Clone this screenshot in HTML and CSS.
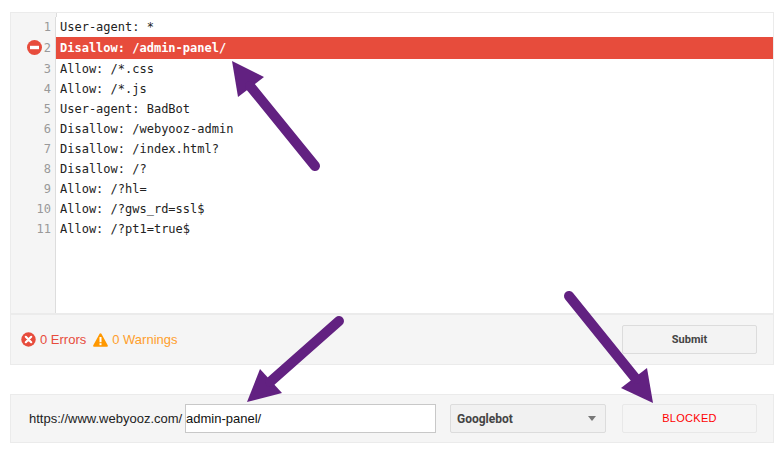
FILE: index.html
```html
<!DOCTYPE html>
<html lang="en">
<head>
<meta charset="utf-8">
<title>robots.txt tester</title>
<link rel="stylesheet" href="styles.css">
</head>
<body>
<div class="page">
  <section class="editor-panel">
    <div class="editor">
      <div class="line"><span class="gutter">1</span><span class="code">User-agent: *</span></div>
      <div class="line line-error"><span class="gutter"><svg class="marker" width="15" height="15" viewBox="0 0 15 15"><circle cx="7.5" cy="7.5" r="7.5" fill="#e74c3c"/><rect x="3" y="5.8" width="9" height="3.4" fill="#fff"/></svg>2</span><span class="code">Disallow: /admin-panel/</span></div>
      <div class="line"><span class="gutter">3</span><span class="code">Allow: /*.css</span></div>
      <div class="line"><span class="gutter">4</span><span class="code">Allow: /*.js</span></div>
      <div class="line"><span class="gutter">5</span><span class="code">User-agent: BadBot</span></div>
      <div class="line"><span class="gutter">6</span><span class="code">Disallow: /webyooz-admin</span></div>
      <div class="line"><span class="gutter">7</span><span class="code">Disallow: /index.html?</span></div>
      <div class="line"><span class="gutter">8</span><span class="code">Disallow: /?</span></div>
      <div class="line"><span class="gutter">9</span><span class="code">Allow: /?hl=</span></div>
      <div class="line"><span class="gutter">10</span><span class="code">Allow: /?gws_rd=ssl$</span></div>
      <div class="line"><span class="gutter">11</span><span class="code">Allow: /?pt1=true$</span></div>
      <div class="filler"><span class="gutter"></span></div>
    </div>
    <div class="status-bar">
      <div class="counts">
        <svg class="icon" width="15" height="15" viewBox="0 0 15 15"><circle cx="7.5" cy="7.5" r="7.2" fill="#e74c3c"/><path d="M4.8 4.8l5.4 5.4M10.2 4.8l-5.4 5.4" stroke="#fff" stroke-width="2.2" stroke-linecap="round"/></svg>
        <span class="count-errors">0 Errors</span>
        <svg class="icon icon-warn" width="15" height="14" viewBox="0 0 15 14"><path d="M7.5 .3c.4 0 .7.2.9.5l6.3 11.5c.4.7-.1 1.5-.9 1.5H1.2c-.8 0-1.3-.8-.9-1.5L6.6.8c.2-.3.5-.5.9-.5z" fill="#ff9800"/><rect x="6.5" y="4" width="2" height="5.2" fill="#fff"/><rect x="6.5" y="10.2" width="2" height="2" fill="#fff"/></svg>
        <span class="count-warnings">0 Warnings</span>
      </div>
      <button class="btn" type="button">Submit</button>
    </div>
  </section>
  <section class="test-panel">
    <span class="host">https://www.webyooz.com/</span>
    <span class="url-input">admin-panel/</span>
    <div class="agent-select"><span>Googlebot</span><i class="caret"></i></div>
    <div class="result">BLOCKED</div>
  </section>
  <svg class="arrows" width="783" height="454" viewBox="0 0 783 454">
    <g fill="#622181" stroke="none">
      <path d="M232 61L264 77L238 97Z"/>
      <path d="M260 369L282 393L247 402Z"/>
      <path d="M647 368L621 388L653 403Z"/>
    </g>
    <g stroke="#622181" stroke-width="10" stroke-linecap="round" fill="none">
      <path d="M315 166L250 86"/>
      <path d="M339 321L270 382"/>
      <path d="M569 296L636 379"/>
    </g>
  </svg>
</div>
</body>
</html>
```
FILE: styles.css
```css
* { box-sizing: border-box; }
html, body { margin: 0; padding: 0; background: #fff; }
.page {
  position: relative;
  width: 783px;
  height: 454px;
  padding: 12px 10px 0;
  font-family: "Liberation Sans", Arial, sans-serif;
  overflow: hidden;
}
.editor-panel {
  width: 764px;
  height: 353px;
  border: 1px solid #ebebeb;
  display: flex;
  flex-direction: column;
}
.editor {
  position: relative;
  flex: 1;
  display: flex;
  flex-direction: column;
  padding-top: 4px;
  background: #fff;
}
.editor::before {
  content: "";
  position: absolute;
  left: 0;
  top: 0;
  width: 45px;
  height: 4px;
  background: #f5f5f5;
  border-right: 1px solid #ddd;
}
.line {
  display: flex;
  height: 20px;
  line-height: 20px;
  font-family: "DejaVu Sans Mono", monospace;
  font-size: 12px;
  color: #222;
}
.gutter {
  flex: none;
  position: relative;
  width: 45px;
  padding-right: 4px;
  text-align: right;
  color: #999;
  background: #f5f5f5;
  border-right: 1px solid #ddd;
}
.code { padding-left: 4px; white-space: pre; }
.line-error { height: 22px; line-height: 22px; }
.line-error .code {
  flex: 1;
  background: #e74c3c;
  color: #fff;
  font-weight: 700;
}
.marker { position: absolute; left: 16px; top: 3px; }
.filler { flex: 1; display: flex; }
.filler .gutter { height: 100%; }
.status-bar {
  flex: none;
  height: 51px;
  border-top: 2px solid #ebebeb;
  background: #f5f5f5;
  display: flex;
  align-items: center;
  justify-content: space-between;
  padding: 0 16px 0 10px;
}
.counts {
  display: flex;
  align-items: center;
  font-size: 13px;
}
.icon { flex: none; margin-right: 4px; }
.icon-warn { margin-left: 7px; }
.count-errors { color: #e74c3c; }
.count-warnings { color: #ff9e2c; }
.btn {
  width: 135px;
  height: 29px;
  padding: 0;
  border: 1px solid #dcdcdc;
  border-radius: 2px;
  background: #f3f3f3;
  color: #444;
  font: 700 11px "Roboto", "Liberation Sans", sans-serif;
}
.test-panel {
  margin-top: 29px;
  width: 764px;
  height: 49px;
  border: 1px solid #ebebeb;
  background: #f5f5f5;
  display: flex;
  align-items: center;
  padding-left: 18px;
  font-size: 13px;
  color: #222;
}
.host { width: 156px; flex: none; white-space: nowrap; }
.url-input {
  flex: none;
  width: 251px;
  height: 29px;
  line-height: 27px;
  border: 1px solid #c8c8c8;
  background: #fff;
  color: #111;
}
.agent-select {
  flex: none;
  width: 156px;
  height: 29px;
  margin-left: 14px;
  border: 1px solid #dcdcdc;
  border-radius: 2px;
  background: #f1f1f1;
  display: flex;
  align-items: center;
  justify-content: space-between;
  padding: 0 9px 0 6px;
  font: 700 12px "Roboto", "Liberation Sans", sans-serif;
  color: #444;
}
.caret {
  width: 0;
  height: 0;
  border-left: 4px solid transparent;
  border-right: 4px solid transparent;
  border-top: 5px solid #777;
}
.result {
  flex: none;
  width: 135px;
  height: 29px;
  margin-left: 16px;
  border: 1px solid #e8e8e8;
  border-radius: 2px;
  text-align: center;
  line-height: 26px;
  font-size: 11px;
  letter-spacing: .3px;
  color: #f00;
}
.arrows { position: absolute; left: 0; top: 0; pointer-events: none; }
```
